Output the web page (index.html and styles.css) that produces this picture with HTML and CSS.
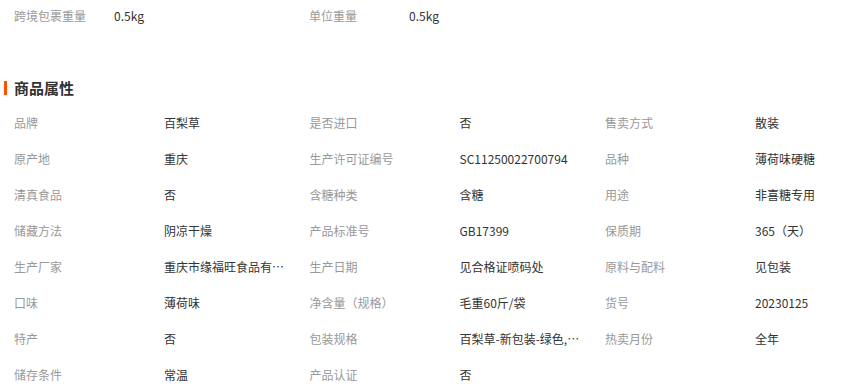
FILE: index.html
```html
<!DOCTYPE html>
<html lang="zh-CN">
<head>
<meta charset="utf-8">
<title>商品属性</title>
<link rel="stylesheet" href="styles.css">
</head>
<body>
<div class="page">
  <div class="top-row">
    <div class="top-item"><span class="top-label">跨境包裹重量</span><span class="top-value">0.5kg</span></div>
    <div class="top-item"><span class="top-label">单位重量</span><span class="top-value">0.5kg</span></div>
  </div>

  <h2 class="section-title">商品属性</h2>

  <ul class="attrs">
    <li class="attr"><span class="attr-label">品牌</span><span class="attr-value">百梨草</span></li>
    <li class="attr"><span class="attr-label">是否进口</span><span class="attr-value">否</span></li>
    <li class="attr"><span class="attr-label">售卖方式</span><span class="attr-value">散装</span></li>

    <li class="attr"><span class="attr-label">原产地</span><span class="attr-value">重庆</span></li>
    <li class="attr"><span class="attr-label">生产许可证编号</span><span class="attr-value">SC11250022700794</span></li>
    <li class="attr"><span class="attr-label">品种</span><span class="attr-value">薄荷味硬糖</span></li>

    <li class="attr"><span class="attr-label">清真食品</span><span class="attr-value">否</span></li>
    <li class="attr"><span class="attr-label">含糖种类</span><span class="attr-value">含糖</span></li>
    <li class="attr"><span class="attr-label">用途</span><span class="attr-value">非喜糖专用</span></li>

    <li class="attr"><span class="attr-label">储藏方法</span><span class="attr-value">阴凉干燥</span></li>
    <li class="attr"><span class="attr-label">产品标准号</span><span class="attr-value">GB17399</span></li>
    <li class="attr"><span class="attr-label">保质期</span><span class="attr-value">365（天）</span></li>

    <li class="attr"><span class="attr-label">生产厂家</span><span class="attr-value">重庆市缘福旺食品有限公司</span></li>
    <li class="attr"><span class="attr-label">生产日期</span><span class="attr-value">见合格证喷码处</span></li>
    <li class="attr"><span class="attr-label">原料与配料</span><span class="attr-value">见包装</span></li>

    <li class="attr"><span class="attr-label">口味</span><span class="attr-value">薄荷味</span></li>
    <li class="attr"><span class="attr-label">净含量（规格）</span><span class="attr-value">毛重60斤/袋</span></li>
    <li class="attr"><span class="attr-label">货号</span><span class="attr-value">20230125</span></li>

    <li class="attr"><span class="attr-label">特产</span><span class="attr-value">否</span></li>
    <li class="attr"><span class="attr-label">包装规格</span><span class="attr-value">百梨草-新包装-绿色,红色</span></li>
    <li class="attr"><span class="attr-label">热卖月份</span><span class="attr-value">全年</span></li>

    <li class="attr"><span class="attr-label">储存条件</span><span class="attr-value">常温</span></li>
    <li class="attr"><span class="attr-label">产品认证</span><span class="attr-value">否</span></li>
  </ul>
</div>
</body>
</html>
```

FILE: styles.css
```css
* {
  box-sizing: border-box;
}

html, body {
  margin: 0;
  padding: 0;
  background: #fff;
}

body {
  font-family: "Noto Sans CJK SC", "Noto Sans", sans-serif;
  font-size: 12px;
  color: #333;
  overflow: hidden;
}

.page {
  width: 850px;
}

.top-row {
  display: grid;
  grid-template-columns: 295px 295px;
  padding-left: 14px;
  height: 32px;
  line-height: 32px;
}

.top-item {
  display: flex;
}

.top-label {
  width: 100px;
  color: #999;
}

.top-value {
  color: #333;
}

.section-title {
  position: relative;
  margin: 46px 0 0 0;
  padding-left: 14px;
  height: 20px;
  line-height: 20px;
  font-size: 15px;
  font-weight: bold;
  color: #333;
}

.section-title::before {
  content: "";
  position: absolute;
  left: 4px;
  top: 3px;
  width: 3px;
  height: 14px;
  background: #ff5000;
}

.attrs {
  list-style: none;
  margin: 7px 0 0 0;
  padding: 0 0 0 14px;
  display: grid;
  grid-template-columns: 295.5px 295.5px minmax(0, 1fr);
}

.attr {
  display: flex;
  min-width: 0;
  height: 36px;
  line-height: 36px;
}

.attr-label {
  flex: 0 0 150px;
  color: #999;
  white-space: nowrap;
}

.attr-value {
  flex: 0 1 124px;
  min-width: 0;
  color: #333;
  white-space: nowrap;
  overflow: hidden;
  text-overflow: ellipsis;
}
```
